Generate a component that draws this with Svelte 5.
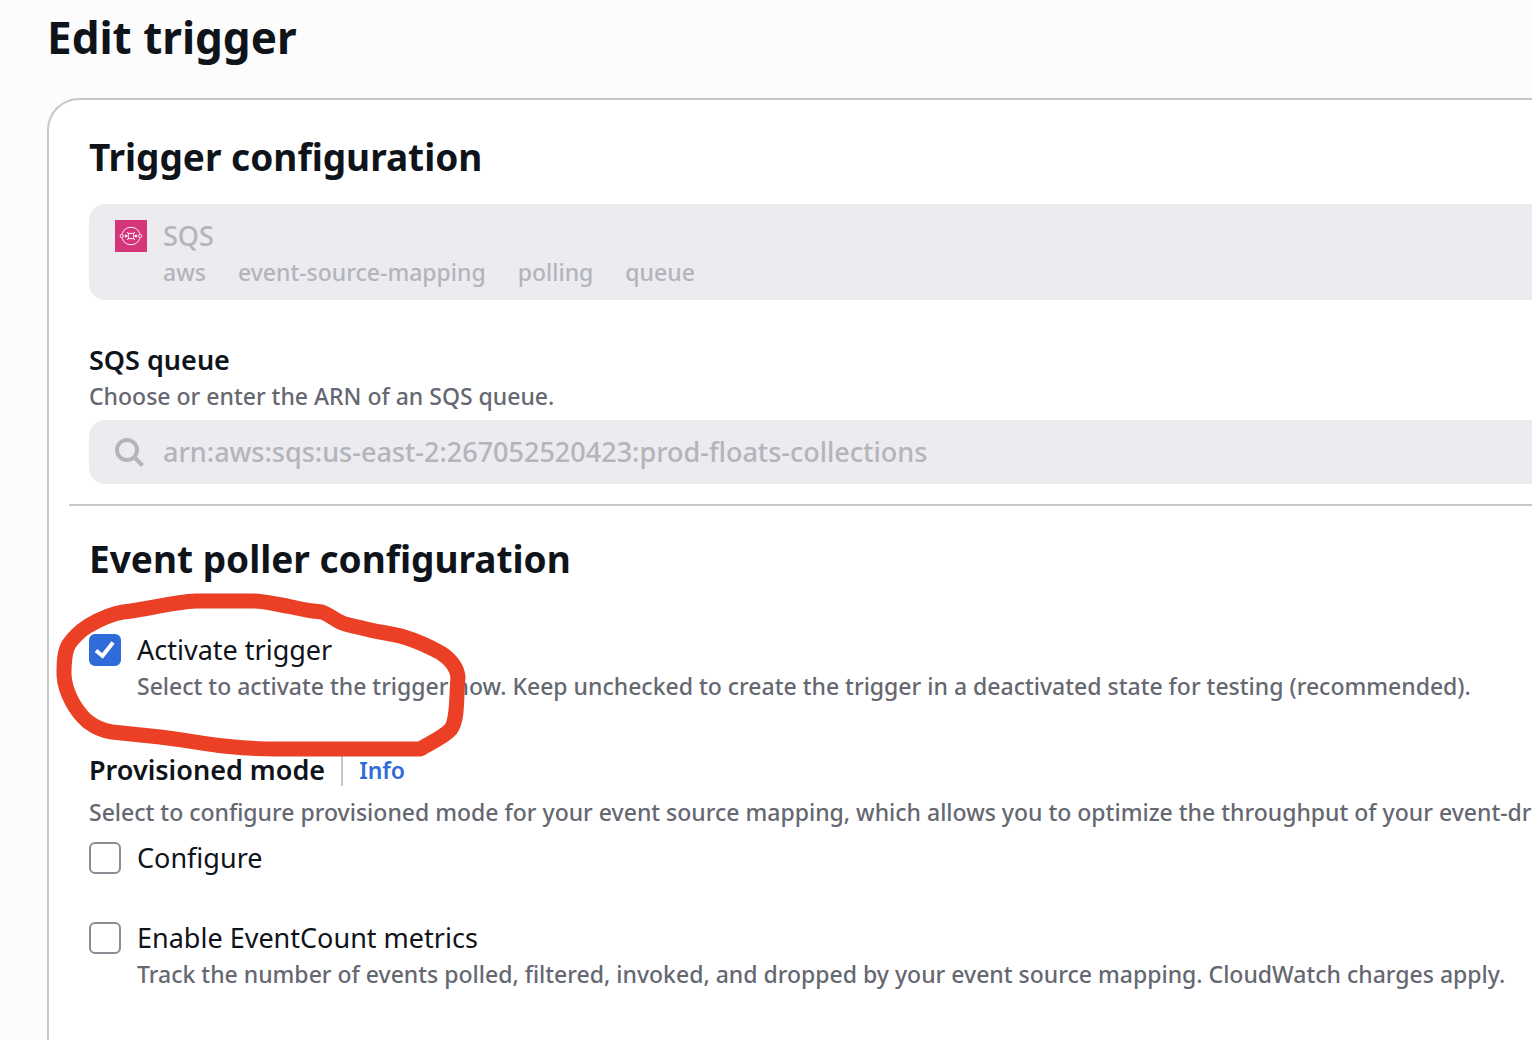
<script>
  let activate = $state(true);
  let provisioned = $state(false);
  let metrics = $state(false);
  let queueArn = $state('arn:aws:sqs:us-east-2:267052520423:prod-floats-collections');

  const tags = ['aws', 'event-source-mapping', 'polling', 'queue'];
</script>

{#snippet tick()}
  <svg class="tick" viewBox="0 0 32 32" aria-hidden="true">
    <path d="M7 16.5 L13.5 22 L24 8.5" />
  </svg>
{/snippet}

<main class="page">
  <h1>Edit trigger</h1>

  <div class="card">
    <section>
      <h2>Trigger configuration</h2>

      <button class="source" type="button" aria-haspopup="listbox" disabled>
        <svg class="source-icon" viewBox="0 0 32 32" aria-hidden="true">
          <rect width="32" height="32" fill="#d6347b" />
          <g fill="none" stroke="#fff" stroke-width="0.9">
            <path d="M7.2 13.8 A9.2 9.2 0 0 1 24.8 13.8" />
            <path d="M7.2 18.2 A9.2 9.2 0 0 0 24.8 18.2" />
            <circle cx="6.7" cy="16" r="1.6" />
            <circle cx="25.3" cy="16" r="1.6" />
            <rect x="13.3" y="13.3" width="5.4" height="5.4" />
            <path d="M13.3 13.3 L12 12 M18.7 13.3 L20 12 M13.3 18.7 L12 20 M18.7 18.7 L20 20" />
            <path d="M9.5 16 H12.2 M19.8 16 H22.5" />
            <path d="M10.8 14.8 L12.2 16 L10.8 17.2 Z M21.2 14.8 L19.8 16 L21.2 17.2 Z" fill="#fff" />
          </g>
        </svg>
        <span class="source-text">
          <span class="source-name">SQS</span>
          <span class="tags">
            {#each tags as tag}
              <span>{tag}</span>
            {/each}
          </span>
        </span>
      </button>

      <div class="field">
        <label class="label" for="queue">SQS queue</label>
        <p class="hint" id="queue-hint">Choose or enter the ARN of an SQS queue.</p>
        <div class="search">
          <svg viewBox="0 0 32 32" aria-hidden="true">
            <circle cx="12" cy="14" r="10" />
            <path d="M19 21 L27.5 29.5" />
          </svg>
          <input id="queue" type="text" aria-describedby="queue-hint" bind:value={queueArn} disabled />
        </div>
      </div>
    </section>

    <hr />

    <section>
      <h2>Event poller configuration</h2>

      <div class="option marked">
        <span class="box">
          <input id="activate" type="checkbox" bind:checked={activate} />
          {@render tick()}
        </span>
        <div class="option-text">
          <label for="activate">Activate trigger</label>
          <p class="hint">
            Select to activate the trigger now. Keep unchecked to create the trigger in a deactivated state for testing (recommended).
          </p>
        </div>
        <svg class="marker" viewBox="0 0 420 180" aria-hidden="true">
          <path
            d="M263 26 C255 25 246 23 237 21 C225 19 214 16 203 16 H146 C122 17 100 24 73 27 C60 29 50 34 38 41 C30 46 24 52 19 59 C14 67 14 79 14 90 C15 108 26 126 37 136 C46 143 54 146 62 147 L110 152 C145 156 175 164 225 164 H370 C380 158 394 152 401 144 C408 134 406 114 408 92 C407 82 400 74 391 68 C380 62 367 56 354 52 C340 48 326 47 312 43 C302 41 296 40 290 37 C284 34 278 29 272 27 Z"
          />
        </svg>
      </div>

      <div class="mode">
        <div class="mode-head">
          <h3 class="label">Provisioned mode</h3>
          <a href="#provisioned-info">Info</a>
        </div>
        <p class="hint nowrap">
          Select to configure provisioned mode for your event source mapping, which allows you to optimize the throughput of your event-driven applications.
        </p>
        <div class="option">
          <span class="box">
            <input id="provisioned" type="checkbox" bind:checked={provisioned} />
            {@render tick()}
          </span>
          <div class="option-text">
            <label for="provisioned">Configure</label>
          </div>
        </div>
      </div>

      <div class="option">
        <span class="box">
          <input id="metrics" type="checkbox" bind:checked={metrics} />
          {@render tick()}
        </span>
        <div class="option-text">
          <label for="metrics">Enable EventCount metrics</label>
          <p class="hint">
            Track the number of events polled, filtered, invoked, and dropped by your event source mapping. CloudWatch charges apply.
          </p>
        </div>
      </div>
    </section>
  </div>
</main>

<style>
  :global(body) {
    background: #fcfcfc;
    overflow: hidden;
  }

  .page {
    box-sizing: border-box;
    height: 100vh;
    padding: 9px 0 0 47px;
    overflow: hidden;
    display: flex;
    flex-direction: column;
    font-family: 'Noto Sans', 'Open Sans', sans-serif;
    font-size: 27px;
    line-height: 40px;
    font-weight: 500;
    color: #0f141a;
  }

  h1,
  h2,
  h3,
  p {
    margin: 0;
  }

  h1 {
    margin-bottom: 33px;
    font-size: 44px;
    line-height: 56px;
    font-weight: 700;
  }

  .card {
    flex: 1 0 auto;
    padding: 33px 0 48px 0;
    background: #fff;
    border: 2px solid #c6c6cd;
    border-width: 2px 0 0 2px;
    border-radius: 32px 0 0 0;
  }

  section {
    padding-left: 40px;
  }

  h2 {
    font-size: 37px;
    line-height: 48px;
    font-weight: 700;
  }

  .source {
    display: flex;
    gap: 16px;
    width: 100%;
    height: 96px;
    margin-top: 23px;
    padding: 12px 26px;
    border: 0;
    border-radius: 16px 0 0 16px;
    background: #ebebf0;
    color: #b4b4bb;
    font: inherit;
    text-align: left;
  }

  .source-icon {
    width: 32px;
    height: 32px;
    margin-top: 4px;
  }

  .source-name {
    display: block;
  }

  .tags {
    display: flex;
    gap: 32px;
    font-size: 23px;
    line-height: 32px;
  }

  .field {
    margin-top: 40px;
  }

  .label {
    display: block;
    font-size: 27px;
    line-height: 40px;
    font-weight: 600;
  }

  .hint {
    color: #656871;
    font-size: 23px;
    line-height: 32px;
  }

  .nowrap,
  .option .hint {
    white-space: nowrap;
  }

  .search {
    display: flex;
    align-items: center;
    gap: 16px;
    height: 64px;
    margin-top: 8px;
    padding-left: 26px;
    border-radius: 16px 0 0 16px;
    background: #ebebf0;
  }

  .search svg {
    flex: none;
    width: 32px;
    height: 32px;
    fill: none;
    stroke: #b4b4bb;
    stroke-width: 4;
  }

  .search input {
    flex: 1;
    padding: 0;
    border: 0;
    background: none;
    color: #b4b4bb;
    font: inherit;
  }

  hr {
    height: 2px;
    margin: 20px 0 29px 20px;
    border: 0;
    background: #c6c6cd;
  }

  .option {
    display: flex;
    align-items: flex-start;
    gap: 16px;
  }

  .option label {
    display: block;
    font-weight: 400;
  }

  .box {
    position: relative;
    flex: none;
    width: 32px;
    height: 32px;
    margin-top: 4px;
  }

  .box input {
    box-sizing: border-box;
    display: block;
    width: 32px;
    height: 32px;
    margin: 0;
    appearance: none;
    border: 2px solid #8c8c94;
    border-radius: 6px;
    background: #fff;
  }

  .box input:checked {
    border-color: #2f6bd9;
    background: #2f6bd9;
  }

  .tick {
    position: absolute;
    inset: 0;
    display: none;
    fill: none;
    stroke: #fff;
    stroke-width: 4;
    pointer-events: none;
  }

  .box input:checked + .tick {
    display: block;
  }

  .marked {
    position: relative;
    margin: 47px 0 48px;
  }

  /* hand-drawn ring laid over the option */
  .marker {
    position: absolute;
    top: -45px;
    left: -39px;
    width: 420px;
    height: 180px;
    fill: none;
    stroke: #eb4026;
    stroke-width: 15;
    stroke-linejoin: round;
    pointer-events: none;
  }

  .mode {
    margin-bottom: 40px;
  }

  .mode-head {
    display: flex;
    align-items: center;
    gap: 16px;
    margin-bottom: 6px;
  }

  .mode-head a {
    padding-left: 16px;
    border-left: 2px solid #c6c6cd;
    color: #2f6bd9;
    font-size: 23px;
    line-height: 32px;
    font-weight: 600;
    text-decoration: none;
  }

  .mode .option {
    margin-top: 10px;
  }
</style>
